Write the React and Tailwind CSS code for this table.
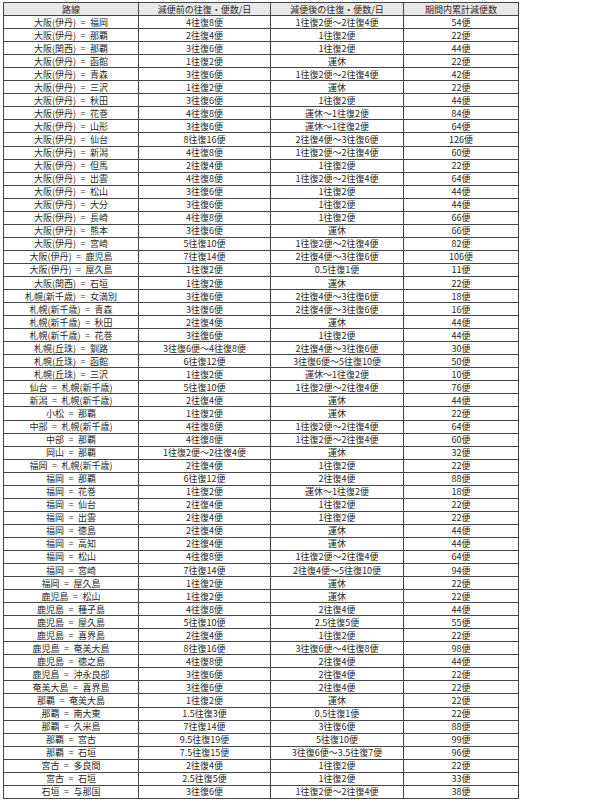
const rows = [
["大阪(伊丹) = 福岡","4往復8便","1往復2便～2往復4便","54便"],
["大阪(伊丹) = 那覇","2往復4便","1往復2便","22便"],
["大阪(関西) = 那覇","3往復6便","1往復2便","44便"],
["大阪(伊丹) = 函館","1往復2便","運休","22便"],
["大阪(伊丹) = 青森","3往復6便","1往復2便～2往復4便","42便"],
["大阪(伊丹) = 三沢","1往復2便","運休","22便"],
["大阪(伊丹) = 秋田","3往復6便","1往復2便","44便"],
["大阪(伊丹) = 花巻","4往復8便","運休～1往復2便","84便"],
["大阪(伊丹) = 山形","3往復6便","運休～1往復2便","64便"],
["大阪(伊丹) = 仙台","8往復16便","2往復4便～3往復6便","126便"],
["大阪(伊丹) = 新潟","4往復8便","1往復2便～2往復4便","60便"],
["大阪(伊丹) = 但馬","2往復4便","1往復2便","22便"],
["大阪(伊丹) = 出雲","4往復8便","1往復2便～2往復4便","64便"],
["大阪(伊丹) = 松山","3往復6便","1往復2便","44便"],
["大阪(伊丹) = 大分","3往復6便","1往復2便","44便"],
["大阪(伊丹) = 長崎","4往復8便","1往復2便","66便"],
["大阪(伊丹) = 熊本","3往復6便","運休","66便"],
["大阪(伊丹) = 宮崎","5往復10便","1往復2便～2往復4便","82便"],
["大阪(伊丹) = 鹿児島","7往復14便","2往復4便～3往復6便","106便"],
["大阪(伊丹) = 屋久島","1往復2便","0.5往復1便","11便"],
["大阪(関西) = 石垣","1往復2便","運休","22便"],
["札幌(新千歳) = 女満別","3往復6便","2往復4便～3往復6便","18便"],
["札幌(新千歳) = 青森","3往復6便","2往復4便～3往復6便","16便"],
["札幌(新千歳) = 秋田","2往復4便","運休","44便"],
["札幌(新千歳) = 花巻","3往復6便","1往復2便","44便"],
["札幌(丘珠) = 釧路","3往復6便～4往復8便","2往復4便～3往復6便","30便"],
["札幌(丘珠) = 函館","6往復12便","3往復6便～5往復10便","50便"],
["札幌(丘珠) = 三沢","1往復2便","運休～1往復2便","10便"],
["仙台 = 札幌(新千歳)","5往復10便","1往復2便～2往復4便","76便"],
["新潟 = 札幌(新千歳)","2往復4便","運休","44便"],
["小松 = 那覇","1往復2便","運休","22便"],
["中部 = 札幌(新千歳)","4往復8便","1往復2便～2往復4便","64便"],
["中部 = 那覇","4往復8便","1往復2便～2往復4便","60便"],
["岡山 = 那覇","1往復2便～2往復4便","運休","32便"],
["福岡 = 札幌(新千歳)","2往復4便","1往復2便","22便"],
["福岡 = 那覇","6往復12便","2往復4便","88便"],
["福岡 = 花巻","1往復2便","運休～1往復2便","18便"],
["福岡 = 仙台","2往復4便","1往復2便","22便"],
["福岡 = 出雲","2往復4便","1往復2便","22便"],
["福岡 = 徳島","2往復4便","運休","44便"],
["福岡 = 高知","2往復4便","運休","44便"],
["福岡 = 松山","4往復8便","1往復2便～2往復4便","64便"],
["福岡 = 宮崎","7往復14便","2往復4便～5往復10便","94便"],
["福岡 = 屋久島","1往復2便","運休","22便"],
["鹿児島 = 松山","1往復2便","運休","22便"],
["鹿児島 = 種子島","4往復8便","2往復4便","44便"],
["鹿児島 = 屋久島","5往復10便","2.5往復5便","55便"],
["鹿児島 = 喜界島","2往復4便","1往復2便","22便"],
["鹿児島 = 奄美大島","8往復16便","3往復6便～4往復8便","98便"],
["鹿児島 = 徳之島","4往復8便","2往復4便","44便"],
["鹿児島 = 沖永良部","3往復6便","2往復4便","22便"],
["奄美大島 = 喜界島","3往復6便","2往復4便","22便"],
["那覇 = 奄美大島","1往復2便","運休","22便"],
["那覇 = 南大東","1.5往復3便","0.5往復1便","22便"],
["那覇 = 久米島","7往復14便","3往復6便","88便"],
["那覇 = 宮古","9.5往復19便","5往復10便","99便"],
["那覇 = 石垣","7.5往復15便","3往復6便～3.5往復7便","96便"],
["宮古 = 多良間","2往復4便","1往復2便","22便"],
["宮古 = 石垣","2.5往復5便","1往復2便","33便"],
["石垣 = 与那国","3往復6便","1往復2便～2往復4便","38便"],
];

export default function App() {
  return (
    <div className="w-[590px] h-[800px] bg-white overflow-hidden pt-[2px] pl-[3px]">
      <table className="border-collapse table-fixed w-[515px] text-[9px] leading-none text-[#2a2a2a] font-['Noto_Sans_CJK_JP','Noto_Sans',sans-serif]">
        <colgroup>
          <col className="w-[135px]" />
          <col className="w-[132px]" />
          <col className="w-[133px]" />
          <col className="w-[115px]" />
        </colgroup>
        <thead>
          <tr className="h-[13.05px] bg-[#e8e8e8]">
            <th className="border border-[#444] font-normal text-center p-0">路線</th>
            <th className="border border-[#444] font-normal text-center p-0">減便前の往復・便数/日</th>
            <th className="border border-[#444] font-normal text-center p-0">減便後の往復・便数/日</th>
            <th className="border border-[#444] font-normal text-center p-0">期間内累計減便数</th>
          </tr>
        </thead>
        <tbody>
          {rows.map((r, i) => (
            <tr key={i} className="h-[13.05px]">
              {r.map((c, j) => (
                <td key={j} className="border border-[#444] text-center p-0 whitespace-nowrap">
                  {j === 0 ? c.replace(" = ", "\u2002=\u2002") : c}
                </td>
              ))}
            </tr>
          ))}
        </tbody>
      </table>
    </div>
  );
}
